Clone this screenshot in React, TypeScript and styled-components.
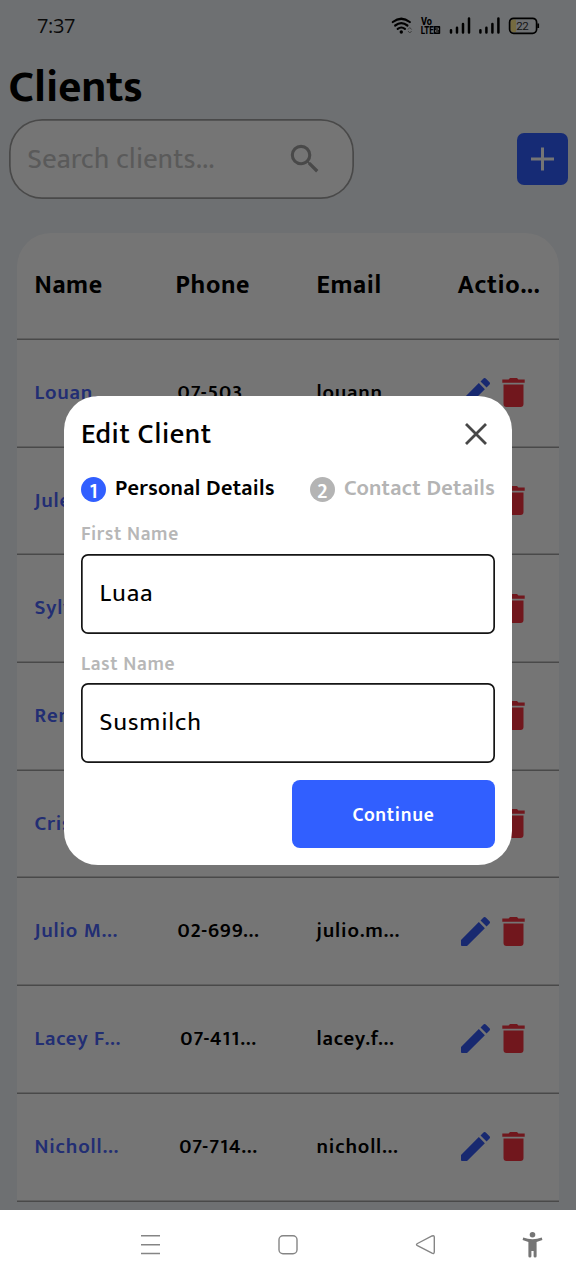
import React from "react";
import styled, { createGlobalStyle } from "styled-components";

const GlobalStyle = createGlobalStyle`
  *, *::before, *::after { box-sizing: border-box; }
  body {
    margin: 0;
    background: #fff;
    font-family: "Mukta", "Noto Sans", "Open Sans", sans-serif;
    color: #000;
  }
`;

const Phone = styled.div`
  position: relative;
  width: 576px;
  height: 1280px;
  display: flex;
  flex-direction: column;
  overflow: hidden;
`;

const Screen = styled.main`
  height: 1210px;
  overflow: hidden;
  background: #f0f4f8;
  display: flex;
  flex-direction: column;
`;

const StatusBar = styled.div`
  height: 52px;
  flex: none;
  display: flex;
  justify-content: space-between;
  padding: 0 36px 0 37px;
`;

const Time = styled.span`
  font: 400 20px/51px "Open Sans", sans-serif;
  letter-spacing: -0.35px;
  color: #1a1a1a;
`;

const StatusIcons = styled.svg`
  display: block;
  width: 150px;
  height: 52px;
`;

const Title = styled.h1`
  margin: 0;
  padding-left: 8.5px;
  height: 67px;
  flex: none;
  font-size: 44.6px;
  font-weight: 700;
  line-height: 73px;
`;

const Toolbar = styled.div`
  display: flex;
  flex: none;
  align-items: center;
  justify-content: space-between;
  height: 80px;
  padding: 0 8px 0 9px;
`;

const SearchBox = styled.div`
  display: flex;
  align-items: center;
  justify-content: space-between;
  width: 345px;
  height: 80px;
  padding: 0 30px 0 18.5px;
  box-shadow: inset 0 0 0 1.7px #a0a0a0;
  border-radius: 33px;
  background: #fff;
`;

const Placeholder = styled.span`
  font-size: 28.4px;
  line-height: 36px;
  padding-top: 1px;
  letter-spacing: 0.32px;
  color: #c4c4c4;
`;

const AddButton = styled.button`
  width: 51px;
  height: 52px;
  padding: 0;
  border: 0;
  border-radius: 7px;
  background: #315fff;
  display: grid;
  place-items: center;
`;

const Card = styled.section`
  flex: none;
  width: 542px;
  margin: 34px 0 0 17px;
  border-radius: 34px 34px 0 0;
  background: #fff;
`;

const Row = styled.div<{ $head?: boolean }>`
  display: grid;
  grid-template-columns: 141px 141px 141px 1fr;
  align-items: center;
  height: ${(p) => (p.$head ? 107 : 107.7)}px;
  padding: 0 0 ${(p) => (p.$head ? 1 : 2)}px 17.5px;
  box-shadow: inset 0 -1.6px 0 #a0a0a0;
`;

const HeadCell = styled.span`
  font-size: 25.8px;
  font-weight: 700;
  line-height: 32px;
  white-space: nowrap;
  letter-spacing: 0.6px;
`;

const Cell = styled.span<{ $tone?: "link"; $centered?: boolean }>`
  width: 86px;
  font-size: 20.8px;
  font-weight: 600;
  line-height: 26px;
  white-space: nowrap;
  display: flex;
  justify-content: ${(p) => (p.$centered ? "center" : "flex-start")};
  color: ${(p) => (p.$tone === "link" ? "#4a64fa" : "#000")};
  letter-spacing: 0.8px;
`;

const Actions = styled.div`
  display: flex;
  gap: 12px;
  padding-left: 3px;
`;

const Overlay = styled.div`
  position: absolute;
  left: 0;
  top: 0;
  width: 576px;
  height: 1210px;
  background: rgba(0, 0, 0, 0.54);
  padding: 396px 64px 0;
`;

const Modal = styled.div`
  height: 469px;
  padding: 17px;
  border-radius: 34px;
  background: #fff;
  display: flex;
  flex-direction: column;
`;

const ModalHeader = styled.div`
  display: flex;
  align-items: center;
  justify-content: space-between;
  height: 42px;
  padding-right: 8px;
`;

const ModalTitle = styled.h2`
  margin: 0;
  font-size: 28.4px;
  font-weight: 500;
  letter-spacing: 0.6px;
`;

const Steps = styled.div`
  display: flex;
  justify-content: space-between;
  align-items: center;
  height: 30px;
  margin-top: 19px;
`;

const Step = styled.div<{ $active?: boolean }>`
  display: flex;
  align-items: center;
  gap: 9px;
  font-size: 22.4px;
  font-weight: 600;
  line-height: 24px;
  letter-spacing: 0.27px;
  white-space: nowrap;
  color: ${(p) => (p.$active ? "#000" : "#b4b4b4")};
`;

const StepNumber = styled.span<{ $active?: boolean }>`
  width: 25px;
  height: 25px;
  border-radius: 50%;
  text-align: center;
  font-size: 21.5px;
  line-height: 29px;
  color: #fff;
  background: ${(p) => (p.$active ? "#315fff" : "#b4b4b4")};
`;

const FieldLabel = styled.label`
  height: 50px;
  padding-top: 17px;
  font-size: 19.5px;
  font-weight: 600;
  line-height: 26px;
  letter-spacing: 0.65px;
  color: #b7b7b7;

  & ~ & {
    height: 49px;
  }
`;

const Field = styled.div`
  height: 80px;
  box-shadow: inset 0 0 0 1.7px #151515;
  border-radius: 7px;
  padding-left: 18.5px;
  font-size: 25.6px;
  line-height: 79px;
  letter-spacing: 0.85px;
`;

const Continue = styled.button`
  align-self: flex-end;
  width: 203px;
  height: 68px;
  margin-top: 17px;
  border: 0;
  border-radius: 8px;
  background: #315fff;
  color: #fff;
  font: 600 19.5px/70px "Mukta", "Noto Sans", sans-serif;
  letter-spacing: 0.7px;
  padding: 0;
`;

const NavBar = styled.nav`
  height: 70px;
  display: flex;
  background: #fff;
`;

const rows = [
  ["Louan...", "07-503...", "louann..."],
  ["Julee...", "02-448...", "julee.b..."],
  ["Sylvi...", "03-611...", "sylvia.f..."],
  ["Rene...", "08-257...", "rene.b..."],
  ["Crist...", "02-984...", "cristal..."],
  ["Julio M...", "02-699...", "julio.m..."],
  ["Lacey F...", "07-411...", "lacey.f..."],
  ["Nicholl...", "07-714...", "nicholl..."],
];

const PencilIcon = () => (
  <svg width="29" height="29" viewBox="3 3 18 18" fill="#3659f5">
    <path d="M20.71 7.04c.39-.39.39-1.04 0-1.41l-2.34-2.34c-.37-.39-1.02-.39-1.41 0l-1.84 1.83 3.75 3.75M3 17.25v3.2q0 .55.55.55h3.2L17.81 9.93l-3.75-3.75z" />
  </svg>
);

const TrashIcon = () => (
  <svg width="23" height="29" viewBox="0 0 23 29" fill="#f63340">
    <path d="M.3 1.4h6.3L8 0h7l1.4 1.4h6.3v3.400H.3zM1.500 6.500h20v19.500q0 3-3 3h-14q-3 0-3-3z" />
  </svg>
);

const Signal = ({ x }: { x: number }) => (
  <g stroke="#000" strokeWidth="2.5" strokeLinecap="round">
    <path d={`M${x} 30.2v2.2M${x + 6} 27.8v4.6M${x + 12} 24v8.4M${x + 18} 18.5v13.9`} />
  </g>
);

export default function App() {
  return (
    <>
      <GlobalStyle />
      <Phone>
        <Screen>
          <StatusBar>
            <Time>7:37</Time>
            <StatusIcons viewBox="390 0 150 52">
              <g fill="none" stroke="#000" strokeWidth="2.2" strokeLinecap="round">
                <path d="M392.8 22q8.500-6.500 17 0M395.200 25.500q6.100-4.600 12.200 0M397.700 28.800q3.600-2.600 7.200 0" />
              </g>
              <circle cx="401.300" cy="32" r="1.700" />
              <path d="M408 29.500l1.800-2 1.800 2M408 31l1.800 2 1.800-2" fill="none" stroke="#8c8c8c" strokeWidth="1" />
              <g fontFamily="Roboto, sans-serif" fontWeight="800">
                <text x="421" y="25.300" fontSize="10.500" textLength="11" lengthAdjust="spacingAndGlyphs">Vo</text>
                <text x="420.800" y="33.800" fontSize="10" textLength="13" lengthAdjust="spacingAndGlyphs">LTE</text>
              </g>
              <rect x="433.800" y="26" width="6.400" height="8" rx=".8" />
              <path d="M435.400 28h3v2h-2.800v2h3" fill="none" stroke="#e8e8e8" strokeWidth=".9" />
              <Signal x={451} />
              <Signal x={480.400} />
              <path d="M516 19.500h-2.400q-3.200 0-3.200 3.200v6.200q0 3.200 3.200 3.200h2.400z" fill="#ffe98d" />
              <rect x="509.600" y="18.300" width="27" height="15" rx="4" fill="none" stroke="#000" strokeWidth="1.700" />
              <path d="M538.200 23.500v4.500" stroke="#000" strokeWidth="1.800" />
              <text x="516.300" y="29.800" fontSize="11.500" fill="#333" fontFamily="Roboto, sans-serif" textLength="12.300">22</text>
            </StatusIcons>
          </StatusBar>
          <Title>Clients</Title>
          <Toolbar>
            <SearchBox>
              <Placeholder>Search clients...</Placeholder>
              <svg width="38" height="38" viewBox="0 0 24 24" fill="#a0a0a0">
                <path d="M15.500 14h-.79l-.28-.27A6.471 6.471 0 0 0 16 9.500 6.500 6.500 0 1 0 9.500 16c1.610 0 3.090-.59 4.230-1.570l.27.28v.79l5 4.990L20.490 19l-4.990-5zm-6 0C7.010 14 5 11.990 5 9.500S7.010 5 9.500 5 14 7.010 14 9.500 11.990 14 9.500 14z" />
              </svg>
            </SearchBox>
            <AddButton aria-label="Add client">
              <svg width="24" height="24" viewBox="0 0 24 24" stroke="#fff" strokeWidth="3">
                <path d="M11.500 .5v23M0 12h23" />
              </svg>
            </AddButton>
          </Toolbar>
          <Card>
            <Row $head>
              <HeadCell>Name</HeadCell>
              <HeadCell>Phone</HeadCell>
              <HeadCell>Email</HeadCell>
              <HeadCell>Actio...</HeadCell>
            </Row>
            {rows.map(([name, phone, email]) => (
              <Row key={name}>
                <Cell $tone="link">{name}</Cell>
                <Cell $centered>{phone}</Cell>
                <Cell>{email}</Cell>
                <Actions>
                  <PencilIcon />
                  <TrashIcon />
                </Actions>
              </Row>
            ))}
          </Card>
        </Screen>
        <NavBar>
          <svg width="576" height="70" viewBox="0 1210 576 70" fill="none" stroke="#858585" strokeWidth="1.400">
            <path d="M141 1235.800h19M141 1244.700h19M141 1253.500h19" />
            <rect x="279" y="1235.700" width="18" height="18" rx="4" />
            <path d="M417.500 1243.500l14.500-7.500q2.300-1 2.300 1.400v14.400q0 2.400-2.300 1.400l-14.500-7.500q-2-1.100 0-2.200z" />
            <g fill="#757575" stroke="none">
              <circle cx="532.500" cy="1234.700" r="2.800" />
              <path d="M523.200 1237.500q9.300 3.400 18.600 0l.6 2.500-5.800 2v14.300q0 1.200-1.500 1.200t-1.500-1.200v-5.300h-2.200v5.300q0 1.200-1.500 1.200t-1.500-1.200V1242l-5.800-2z" />
            </g>
          </svg>
        </NavBar>
        <Overlay>
          <Modal role="dialog">
            <ModalHeader>
              <ModalTitle>Edit Client</ModalTitle>
              <svg width="22" height="22" viewBox="0 0 22 22" stroke="#484848" strokeWidth="2.800">
                <path d="M1 1l20 20M21 1L1 21" />
              </svg>
            </ModalHeader>
            <Steps>
              <Step $active>
                <StepNumber $active>1</StepNumber>
                <span>Personal Details</span>
              </Step>
              <Step>
                <StepNumber>2</StepNumber>
                <span>Contact Details</span>
              </Step>
            </Steps>
            <FieldLabel>First Name</FieldLabel>
            <Field>Luaa</Field>
            <FieldLabel>Last Name</FieldLabel>
            <Field>Susmilch</Field>
            <Continue>Continue</Continue>
          </Modal>
        </Overlay>
      </Phone>
    </>
  );
}
